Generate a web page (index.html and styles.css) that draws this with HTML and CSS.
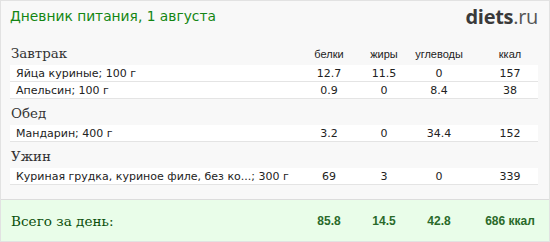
FILE: index.html
```html
<!DOCTYPE html>
<html lang="ru">
<head>
<meta charset="utf-8">
<link rel="stylesheet" href="styles.css">
</head>
<body>
<div class="card">
  <div class="top">
    <div class="title">Дневник питания, 1 августа</div>
    <div class="logo"><b>diets</b>.ru</div>
  </div>
  <div class="list">
    <div class="meal">
      <div class="meal-name">Завтрак</div>
      <div class="hd">белки</div>
      <div class="hd">жиры</div>
      <div class="hd">углеводы</div>
      <div class="hd kc">ккал</div>
    </div>
    <div class="row"><div class="name">Яйца куриные; 100 г</div><div class="v">12.7</div><div class="v">11.5</div><div class="v">0</div><div class="v kc">157</div></div>
    <div class="row"><div class="name">Апельсин; 100 г</div><div class="v">0.9</div><div class="v">0</div><div class="v">8.4</div><div class="v kc">38</div></div>
    <div class="meal"><div class="meal-name">Обед</div></div>
    <div class="row"><div class="name">Мандарин; 400 г</div><div class="v">3.2</div><div class="v">0</div><div class="v">34.4</div><div class="v kc">152</div></div>
    <div class="meal"><div class="meal-name">Ужин</div></div>
    <div class="row"><div class="name">Куриная грудка, куриное филе, без ко...; 300 г</div><div class="v">69</div><div class="v">3</div><div class="v">0</div><div class="v kc">339</div></div>
  </div>
  <div class="total">
    <div class="total-name">Всего за день:</div>
    <div class="t">85.8</div>
    <div class="t">14.5</div>
    <div class="t">42.8</div>
    <div class="t kc">686 ккал</div>
  </div>
</div>
</body>
</html>
```
FILE: styles.css
```css
html, body { margin: 0; padding: 0; }
body { width: 550px; height: 242px; background: #f8f8f8; }
.card {
  box-sizing: border-box;
  width: 550px;
  height: 242px;
  border: 1px solid #e2e2e2;
  background: #f8f8f8;
  display: flex;
  flex-direction: column;
}
.top {
  height: 38px;
  display: flex;
  justify-content: space-between;
  align-items: flex-start;
  padding: 0 11px 0 9px;
}
.title {
  font-family: "DejaVu Sans", sans-serif;
  font-size: 13.8px;
  color: #138613;
  line-height: 18px;
  padding-top: 6px;
}
.logo {
  font-family: "Open Sans", sans-serif;
  font-size: 20px;
  color: #555;
  line-height: 24px;
  padding-top: 4px;
  letter-spacing: -0.3px;
}
.logo b { color: #3a3a3a; font-weight: 700; }
.list { padding: 0 11px 0 9px; }
.meal, .row, .total {
  display: grid;
  grid-template-columns: 292px 54px 56px 54px 71px;
}
.meal {
  height: 26px;
  align-items: end;
}
.meal-name {
  font-family: "DejaVu Serif", serif;
  font-size: 13.4px;
  color: #333;
  line-height: 18px;
  padding-bottom: 2px;
  padding-left: 1px;
}
.hd {
  font-family: "Liberation Sans", sans-serif;
  font-size: 11px;
  color: #222;
  text-align: center;
  line-height: 14px;
  padding-bottom: 4px;
}
.kc { padding-left: 17px; }
.row {
  background: #fff;
  border-bottom: 1px solid #e4e4e4;
  height: 16px;
  align-items: center;
  font-family: "DejaVu Sans", sans-serif;
  font-size: 11px;
  color: #222;
}
.name { padding-left: 6px; white-space: nowrap; }
.v { text-align: center; }
.total {
  margin-top: 14px;
  flex: 1;
  background: #e9fde9;
  border-top: 1px solid #dcdcdc;
  padding: 0 11px 0 9px;
  align-items: center;
}
.total-name {
  font-family: "DejaVu Serif", serif;
  font-size: 13.6px;
  color: #0b4f0b;
  padding-left: 1px;
}
.t {
  font-family: "Liberation Sans", sans-serif;
  font-weight: 700;
  font-size: 12px;
  color: #2a6a2a;
  text-align: center;
  white-space: nowrap;
}
```
